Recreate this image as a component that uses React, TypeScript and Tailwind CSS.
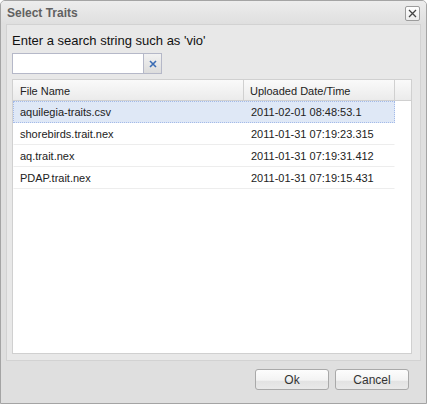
import React from 'react';

const rows = [
    { name: 'aquilegia-traits.csv', date: '2011-02-01 08:48:53.1', selected: true },
    { name: 'shorebirds.trait.nex', date: '2011-01-31 07:19:23.315' },
    { name: 'aq.trait.nex', date: '2011-01-31 07:19:31.412' },
    { name: 'PDAP.trait.nex', date: '2011-01-31 07:19:15.431' },
];

function FooterButton({ label }: { label: string }) {
    return (
        <button className="w-[74px] h-[21px] rounded-[3px] border border-[#a9a9a9] bg-[linear-gradient(to_bottom,#fdfdfd_0%,#f3f3f3_55%,#e2e2e2_56%,#e9e9e9_100%)] text-[12px] text-[#333] leading-none">
            {label}
        </button>
    );
}

export default function App() {
    return (
        <div
            className="w-[427px] h-[404px] flex flex-col bg-[#dfdfdf] border border-[#a4a4a4] rounded-t-[5px] overflow-hidden"
            style={{ fontFamily: '"Liberation Sans", Arial, sans-serif' }}
        >
            {/* Title bar */}
            <div className="h-[23px] flex items-center justify-between pl-[6px] pr-[6px] bg-gradient-to-b from-[#ededed] to-[#dfdfdf]">
                <span className="text-[12px] font-bold text-[#616161]">Select Traits</span>
                <button className="w-[15px] h-[15px] mt-[2px] flex items-center justify-center rounded-[2px] border border-[#9c9c9c] bg-gradient-to-b from-white to-[#ececec]">
                    <svg width="9" height="9" viewBox="0 0 9 9">
                        <path d="M1 1L8 8M8 1L1 8" stroke="#444" strokeWidth="1.3" />
                    </svg>
                </button>
            </div>

            {/* Main panel */}
            <div className="mx-[5px] h-[337px] border border-[#d2d2d2] bg-[#e8e8e8] pl-[5px] pr-[8px] pt-[8px] flex flex-col">
                <p className="text-[13px] text-[#111] leading-[16px]">Enter a search string such as 'vio'</p>
                <div className="mt-[4px] flex h-[21px]">
                    <input className="w-[132px] h-full bg-white border border-[#b5b8c8] outline-none px-1 text-[12px]" />
                    <button className="w-[18px] h-full flex items-center justify-center border border-l-0 border-[#b5b8c8] bg-gradient-to-b from-[#f2f2f2] to-[#dcdcdc]">
                        <svg width="8" height="8" viewBox="0 0 8 8">
                            <path d="M1 1L7 7M7 1L1 7" stroke="#3a6cb4" strokeWidth="1.6" />
                        </svg>
                    </button>
                </div>

                {/* Grid */}
                <div className="mt-[5px] h-[275px] bg-white border border-[#d0d0d0] flex flex-col text-[11px] text-[#222]">
                    <div className="flex h-[21px] bg-gradient-to-b from-[#fafafa] to-[#ebebeb] border-b border-[#d0d0d0] shrink-0">
                        <div className="w-[231px] border-r border-[#d0d0d0] pl-[7px] flex items-center pt-[2px]">File Name</div>
                        <div className="w-[151px] border-r border-[#d0d0d0] pl-[6px] flex items-center pt-[2px]">Uploaded Date/Time</div>
                        <div className="flex-1" />
                    </div>
                    {rows.map((r) => (
                        <div
                            key={r.name}
                            className={`flex w-[382px] h-[22px] shrink-0 items-center border ${
                                r.selected
                                    ? 'bg-[#dfe8f6] border-dotted border-[#a3bae9]'
                                    : 'border-transparent border-b-[#ededed]'
                            }`}
                        >
                            <div className="w-[231px] pl-[6px]">{r.name}</div>
                            <div className="pl-[6px]">{r.date}</div>
                        </div>
                    ))}
                </div>
            </div>

            {/* Footer */}
            <div className="flex-1 flex justify-end items-start pt-[8px] pr-[17px] gap-[6px]">
                <FooterButton label="Ok" />
                <FooterButton label="Cancel" />
            </div>
        </div>
    );
}
